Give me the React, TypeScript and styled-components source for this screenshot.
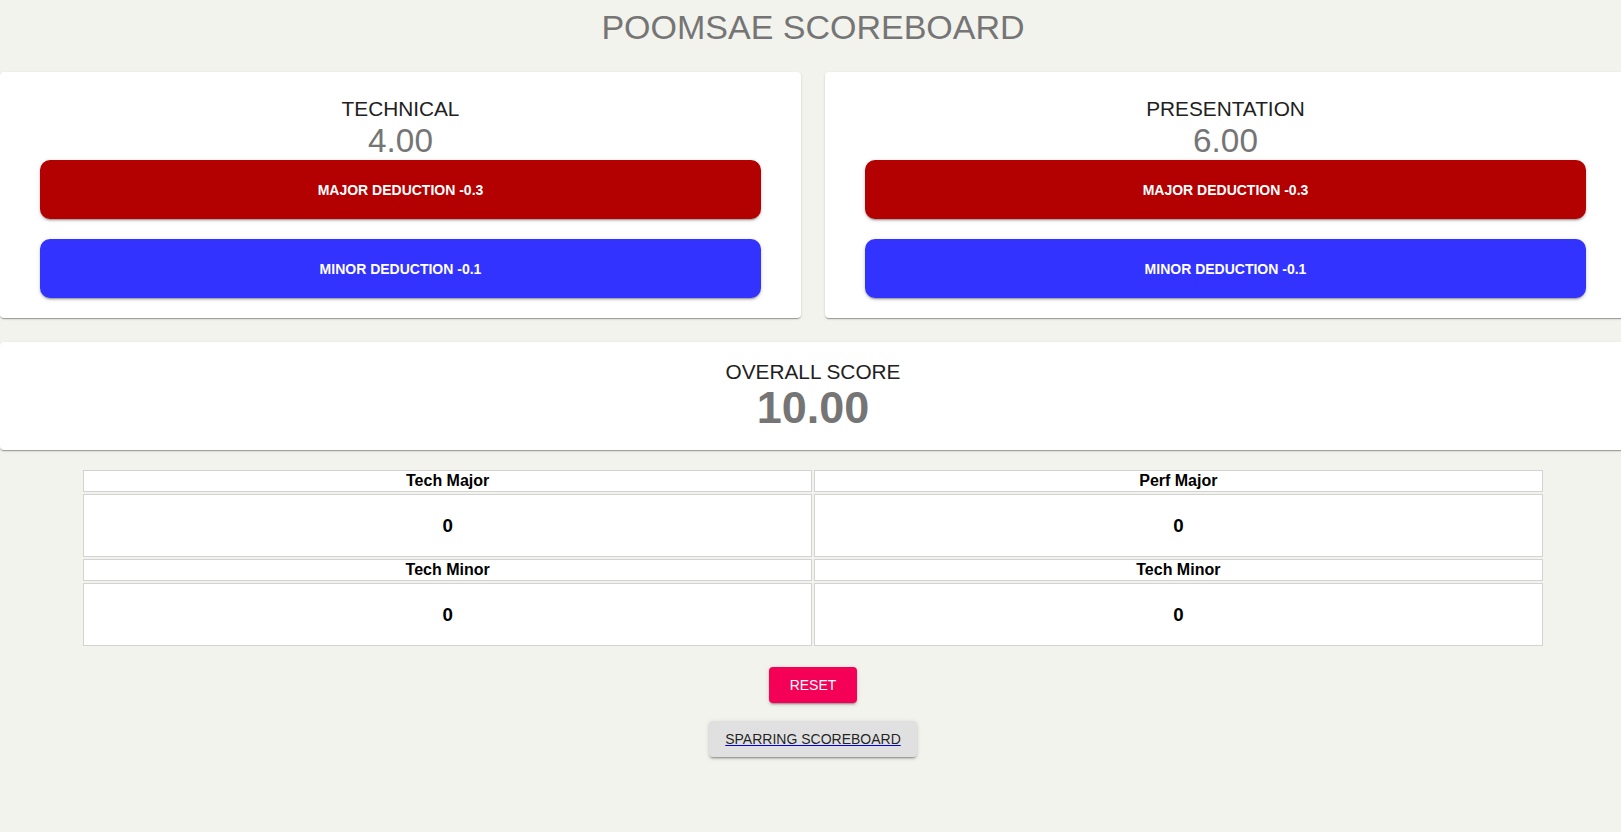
import React from "react";
import styled, { createGlobalStyle } from "styled-components";

const GlobalStyle = createGlobalStyle`
  html, body {
    margin: 0;
    padding: 0;
    background: #f3f3ee;
    overflow-x: hidden;
  }
  body {
    font-family: "Liberation Sans", Arial, Helvetica, sans-serif;
  }
  * { box-sizing: border-box; }
`;

const Page = styled.div`
  width: calc(100% + 5px);
  display: flex;
  flex-direction: column;
  min-height: 832px;
`;

const Title = styled.h1`
  margin: 0 0 25px;
  padding-top: 8px;
  font-size: 34px;
  line-height: 39px;
  font-weight: 400;
  color: #757575;
  text-align: center;
`;

const paperShadow =
  "0px 2px 1px -1px rgba(0,0,0,0.2), 0px 1px 1px 0px rgba(0,0,0,0.14), 0px 1px 3px 0px rgba(0,0,0,0.12)";
const buttonShadow =
  "0px 3px 1px -2px rgba(0,0,0,0.2), 0px 2px 2px 0px rgba(0,0,0,0.14), 0px 1px 5px 0px rgba(0,0,0,0.12)";

const CardRow = styled.div`
  display: grid;
  grid-template-columns: 1fr 1fr;
  column-gap: 24px;
`;

const Card = styled.section`
  background: #fff;
  border-radius: 4px;
  box-shadow: ${paperShadow};
  padding: 25px 0 20px;
  display: flex;
  flex-direction: column;
  align-items: center;
  text-align: center;
`;

const CardTitle = styled.div`
  font-size: 20.8px;
  line-height: 23px;
  color: #212121;
`;

const CardScore = styled.div`
  font-size: 33.3px;
  line-height: 37px;
  color: #757575;
  margin: 2px 0 1px;
`;

const DeductButton = styled.button<{ $tone: string }>`
  width: 90%;
  height: 59px;
  border: none;
  border-radius: 10px;
  background: ${(p) => p.$tone};
  color: #fff;
  font-family: "Liberation Sans", Arial, sans-serif;
  font-size: 14px;
  font-weight: 700;
  text-transform: uppercase;
  box-shadow: ${buttonShadow};
  cursor: pointer;
  & + & {
    margin-top: 20px;
  }
`;

const OverallCard = styled.section`
  margin-top: 24px;
  background: #fff;
  border-radius: 4px;
  box-shadow: ${paperShadow};
  padding: 18px 0 20px;
  text-align: center;
`;

const OverallTitle = styled.div`
  font-size: 20.8px;
  line-height: 23px;
  color: #212121;
`;

const OverallScore = styled.div`
  margin-top: 2px;
  font-size: 45px;
  line-height: 45px;
  font-weight: 700;
  color: #757575;
`;

const Tally = styled.table`
  width: 90%;
  margin: 18px auto 0;
  border-collapse: separate;
  border-spacing: 2px;
  table-layout: fixed;
`;

const HeadCell = styled.th`
  background: #fff;
  border: 1px solid #d3d3d3;
  padding: 1px;
  font-size: 16px;
  line-height: 18px;
  font-weight: 700;
  color: #000;
  text-align: center;
`;

const ValueCell = styled.td`
  background: #fff;
  border: 1px solid #d3d3d3;
  padding: 1px;
  text-align: center;
`;

const ValueText = styled.h3`
  margin: 18.72px 0;
  font-size: 18.72px;
  line-height: 21.5px;
  font-weight: 700;
  color: #000;
`;

const Actions = styled.div`
  display: flex;
  flex-direction: column;
  align-items: center;
  margin-top: 19px;
`;

const ResetButton = styled.button`
  border: none;
  border-radius: 4px;
  background: #f50057;
  color: #fff;
  font-family: "Liberation Sans", Arial, sans-serif;
  font-size: 14px;
  line-height: 24px;
  padding: 6px 20.5px;
  text-transform: uppercase;
  box-shadow: ${buttonShadow};
  cursor: pointer;
`;

const SparringButton = styled.button`
  margin-top: 18px;
  border: none;
  border-radius: 4px;
  background: #e0e0e0;
  font-family: "Liberation Sans", Arial, sans-serif;
  font-size: 14px;
  line-height: 24px;
  padding: 6px 16px;
  box-shadow: ${buttonShadow};
  cursor: pointer;
`;

const SparringLink = styled.a`
  color: rgba(0, 0, 0, 0.87);
  text-decoration: underline;
  text-decoration-color: #0000ee;
  text-transform: uppercase;
`;

type Panel = { title: string; score: string };

const panels: Panel[] = [
  { title: "TECHNICAL", score: "4.00" },
  { title: "PRESENTATION", score: "6.00" },
];

const tallies: [string, string][][] = [
  [
    ["Tech Major", "0"],
    ["Perf Major", "0"],
  ],
  [
    ["Tech Minor", "0"],
    ["Tech Minor", "0"],
  ],
];

export default function App() {
  return (
    <>
      <GlobalStyle />
      <Page>
        <Title>POOMSAE SCOREBOARD</Title>
        <CardRow>
          {panels.map((p) => (
            <Card key={p.title}>
              <CardTitle>{p.title}</CardTitle>
              <CardScore>{p.score}</CardScore>
              <DeductButton $tone="#b30000">Major Deduction -0.3</DeductButton>
              <DeductButton $tone="#3333ff">Minor Deduction -0.1</DeductButton>
            </Card>
          ))}
        </CardRow>
        <OverallCard>
          <OverallTitle>OVERALL SCORE</OverallTitle>
          <OverallScore>10.00</OverallScore>
        </OverallCard>
        <Tally>
          <tbody>
            {tallies.map((row, i) => (
              <React.Fragment key={i}>
                <tr>
                  {row.map(([label], j) => (
                    <HeadCell key={j}>{label}</HeadCell>
                  ))}
                </tr>
                <tr>
                  {row.map(([, value], j) => (
                    <ValueCell key={j}>
                      <ValueText>{value}</ValueText>
                    </ValueCell>
                  ))}
                </tr>
              </React.Fragment>
            ))}
          </tbody>
        </Tally>
        <Actions>
          <ResetButton>Reset</ResetButton>
          <SparringButton>
            <SparringLink href="#">Sparring Scoreboard</SparringLink>
          </SparringButton>
        </Actions>
      </Page>
    </>
  );
}
